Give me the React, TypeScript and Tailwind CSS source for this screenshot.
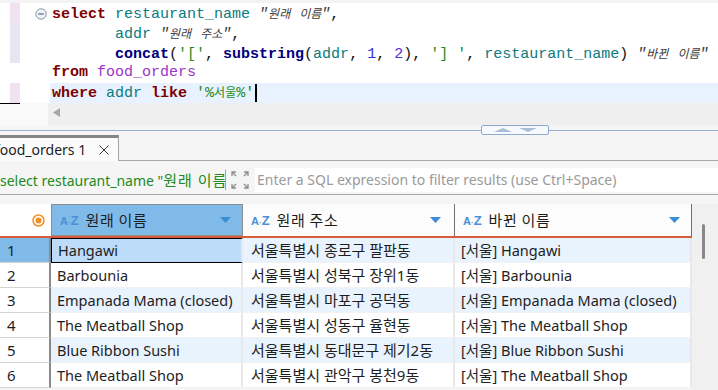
import React from "react";

const KW = ({ children }: { children: React.ReactNode }) => (
  <span className="font-bold text-[#7f0000]">{children}</span>
);
const FN = ({ children }: { children: React.ReactNode }) => (
  <span className="font-bold text-[#000080]">{children}</span>
);
const COL = ({ children }: { children: React.ReactNode }) => (
  <span className="text-[#0a7a80]">{children}</span>
);
const STR = ({ children }: { children: React.ReactNode }) => (
  <span className="text-[#1f8a1f]">{children}</span>
);
const NUM = ({ children }: { children: React.ReactNode }) => (
  <span className="text-[#2e2ee0]">{children}</span>
);
const K = ({ children, italic = false }: { children: React.ReactNode; italic?: boolean }) => (
  <span className={`font-['Noto_Sans_CJK_KR',sans-serif] text-[12px] ${italic ? "italic" : ""}`}>{children}</span>
);
const ALIAS = ({ a, b }: { a: string; b: string }) => (
  <span className="italic text-[#3a3a3a]">
    "<K italic>{a}</K> <K italic>{b}</K>"
  </span>
);

function AZ() {
  return (
    <span className="font-['Liberation_Sans',sans-serif] font-bold text-[#4b8fd4] leading-none flex items-end mr-[7px]">
      <span className="text-[11px]">A</span>
      <span className="text-[8px]">·</span>
      <span className="text-[13px]">Z</span>
    </span>
  );
}

function Tri() {
  return (
    <svg width="11" height="6" viewBox="0 0 11 6">
      <polygon points="0,0 11,0 5.5,6" fill="#3b8ed6" />
    </svg>
  );
}

const rows = [
  ["Hangawi", "서울특별시 종로구 팔판동", "[서울] Hangawi"],
  ["Barbounia", "서울특별시 성북구 장위1동", "[서울] Barbounia"],
  ["Empanada Mama (closed)", "서울특별시 마포구 공덕동", "[서울] Empanada Mama (closed)"],
  ["The Meatball Shop", "서울특별시 성동구 율현동", "[서울] The Meatball Shop"],
  ["Blue Ribbon Sushi", "서울특별시 동대문구 제기2동", "[서울] Blue Ribbon Sushi"],
  ["The Meatball Shop", "서울특별시 관악구 봉천9동", "[서울] The Meatball Shop"],
];

export default function App() {
  return (
    <div className="w-[718px] h-[390px] overflow-hidden bg-[#f5f5f5] flex flex-col font-['Noto_Sans','Noto_Sans_CJK_KR',sans-serif] text-[#1e1e1e]">
      {/* editor */}
      <div className="h-[103px] bg-white flex flex-col shrink-0">
        <div className="h-[3px] bg-[#f3f3f3]" />
        <div className="flex flex-1">
          <div className="w-[50px] flex">
            <div className="w-[10px]" />
            <div className="w-[10px] flex flex-col">
              <div className="h-[20px] bg-[#f1e2f1]" />
              <div className="h-[40px] bg-[#e6e6f2]" />
              <div className="h-[20px]" />
              <div className="h-[20px] bg-[#f1e2f1]" />
            </div>
            <div className="flex-1 pt-[5px] pl-[15px]">
              <svg width="12" height="12" viewBox="0 0 12 12">
                <circle cx="6" cy="6" r="5.2" fill="#eef1f6" stroke="#8c9bb0" strokeWidth="1" />
                <line x1="3.2" y1="6" x2="8.8" y2="6" stroke="#5a6a80" strokeWidth="1.2" />
              </svg>
            </div>
          </div>
          <div className="flex-1 flex flex-col font-['Liberation_Mono','Noto_Sans_CJK_KR',monospace] text-[15px] text-[#111]">
            <div className="h-[20px] leading-[20px] whitespace-pre pl-[2px]">
              <KW>select</KW> <COL>restaurant_name</COL> <ALIAS a="원래" b="이름" />,
            </div>
            <div className="h-[20px] leading-[20px] whitespace-pre pl-[2px]">
              {"       "}<COL>addr</COL> <ALIAS a="원래" b="주소" />,
            </div>
            <div className="h-[20px] leading-[20px] whitespace-pre pl-[2px]">
              {"       "}<FN>concat</FN>(<STR>'['</STR>, <FN>substring</FN>(<COL>addr</COL>, <NUM>1</NUM>, <span className="text-[#5a2bd6]">2</span>), <STR>'] '</STR>, <COL>restaurant_name</COL>) <ALIAS a="바뀐" b="이름" />
            </div>
            <div className="h-[20px] leading-[20px] whitespace-pre pl-[2px]">
              <KW>from</KW> <span className="text-[#9a35c6]">food_orders</span>
            </div>
            <div className="h-[20px] leading-[20px] whitespace-pre pl-[2px] bg-[#e8f2fe] flex items-center">
              <span><KW>where</KW> <COL>addr</COL> <KW>like</KW> <STR>'%<K>서울</K>%'</STR></span>
              <span className="w-[2px] h-[18px] bg-black ml-[1px]" />
            </div>
          </div>
        </div>
      </div>
      {/* horizontal scrollbar */}
      <div className="h-[22px] flex shrink-0">
        <div className="w-[48px] bg-[#f9f9f9] flex items-start">
          <div className="w-[20px] h-px bg-black" />
        </div>
        <div className="flex-1 bg-[#efefef] flex items-center pl-[5px] pb-[4px]">
          <svg width="8" height="9" viewBox="0 0 8 9">
            <polygon points="7,0 7,9 0,4.5" fill="#a6a6a6" />
          </svg>
        </div>
      </div>
      {/* sash */}
      <div className="h-[10px] relative shrink-0">
        <div className="absolute left-0 right-0 top-[5px] h-px bg-[#98b1d3]" />
        <div className="absolute left-[481px] top-0 w-[68px] h-[10px] border border-[#8fa9cc] rounded-[2px] bg-[#f7f9fc] flex items-center justify-center gap-[7px]">
          <svg width="18" height="4" viewBox="0 0 18 4">
            <polygon points="0,4 18,4 9,0" fill="#a9bdd8" />
          </svg>
          <svg width="18" height="4" viewBox="0 0 18 4">
            <polygon points="0,0 18,0 9,4" fill="#a9bdd8" />
          </svg>
        </div>
      </div>
      {/* tab strip */}
      <div className="h-[26px] flex shrink-0">
        <div className="w-[119px] bg-[#fbfbfb] border-t-[3px] border-t-[#868686] border-r border-r-[#a5a5a5] flex items-center overflow-hidden">
          <span className="text-[14px] whitespace-nowrap ml-[-5px] leading-none">food_orders 1</span>
          <svg className="ml-[13px]" width="10" height="10" viewBox="0 0 10 10">
            <line x1="0.5" y1="0.5" x2="9.5" y2="9.5" stroke="#333" strokeWidth="1" />
            <line x1="9.5" y1="0.5" x2="0.5" y2="9.5" stroke="#333" strokeWidth="1" />
          </svg>
        </div>
        <div className="flex-1 border-b border-[#a8a8a8]" />
      </div>
      {/* filter row */}
      <div className="h-[34px] flex items-end pb-[1px] border-b border-[#a9a9a9] shrink-0">
        <div className="w-[255px] h-[26px] flex items-center">
          <span className="text-[14px] text-[#208a20] whitespace-nowrap leading-none w-[222px]">
            select restaurant_name "<span className="text-[15px] tracking-[1px]">원래 이름</span>
          </span>
          <span className="w-px h-[20px] bg-[#a0a0a0] ml-[3px]" />
          <svg className="ml-[5px]" width="18" height="18" viewBox="0 0 18 18" fill="none" stroke="#8e8e8e" strokeWidth="1.3">
            <path d="M1 5V1h4M1 1l4 4" />
            <path d="M13 1h4v4M17 1l-4 4" />
            <path d="M1 13v4h4M1 17l4-4" />
            <path d="M17 13v4h-4M17 17l-4-4" />
          </svg>
        </div>
        <div className="flex-1 h-[24px] bg-white flex items-center pl-[2px] mb-[1px]">
          <span className="text-[14px] text-[#9a9a9a] whitespace-nowrap leading-none">Enter a SQL expression to filter results (use Ctrl+Space)</span>
        </div>
      </div>
      <div className="h-[9px] shrink-0" />
      {/* grid */}
      <div className="flex flex-1 min-h-0">
        <div className="w-[692px] flex flex-col">
          {/* header */}
          <div className="h-[34px] flex border-b-2 border-[#dc5a3c]">
            <div className="w-[51px] bg-white flex items-center justify-end pr-[6px]">
              <svg width="13" height="13" viewBox="0 0 13 13">
                <circle cx="6.5" cy="6.5" r="5.5" fill="white" stroke="#f39022" strokeWidth="1.5" />
                <circle cx="6.5" cy="6.5" r="3" fill="#f39022" />
              </svg>
            </div>
            <div className="w-[192px] bg-[#80bae8] border border-[#8d8d8d] flex items-center pl-[8px] pr-[11px]">
              <AZ />
              <span className="text-[15px] leading-none flex-1 tracking-[0.5px]">원래 이름</span>
              <Tri />
            </div>
            <div className="w-[212px] bg-[#fcfcfc] border-r border-[#707070] flex items-center pl-[8px] pr-[13px]">
              <AZ />
              <span className="text-[15px] leading-none flex-1 tracking-[0.5px]">원래 주소</span>
              <Tri />
            </div>
            <div className="w-[237px] bg-[#fcfcfc] border-r border-[#707070] flex items-center pl-[8px] pr-[11px]">
              <AZ />
              <span className="text-[15px] leading-none flex-1 tracking-[0.5px]">바뀐 이름</span>
              <Tri />
            </div>
          </div>
          {rows.map((r, i) => {
            const odd = i % 2 === 0;
            const bg = odd ? "bg-[#e9f3fd]" : "bg-white";
            return (
              <div key={i} className="h-[25px] flex text-[14.5px] leading-none">
                <div className={`w-[51px] border-r-2 border-r-[#8a8a8a] border-b border-b-[#d4d4d4] flex items-center pl-[7px] text-[15px] ${i === 0 ? "bg-[#80bae8]" : "bg-white"}`}>
                  {i + 1}
                </div>
                <div className={`w-[192px] flex items-center pl-[6px] border-r-2 border-r-[#e8e8e8] ${i === 0 ? "bg-[#bddcf9] border border-black" : `${bg} border-b border-b-[#f2f2f2]`}`}>
                  {r[0]}
                </div>
                <div className={`w-[212px] flex items-center pl-[8px] border-r-2 border-r-[#e8e8e8] border-b border-b-[#f2f2f2] text-[15px] ${bg}`}>
                  {r[1]}
                </div>
                <div className={`w-[237px] flex items-center pl-[6px] border-r-2 border-r-[#e8e8e8] border-b border-b-[#f2f2f2] ${bg}`}>
                  {r[2]}
                </div>
              </div>
            );
          })}
        </div>
        <div className="flex-1 bg-[#f0f0f0] pt-[20px] pl-[10px]">
          <div className="w-[3px] h-[35px] bg-[#888] rounded-[2px]" />
        </div>
      </div>
    </div>
  );
}
